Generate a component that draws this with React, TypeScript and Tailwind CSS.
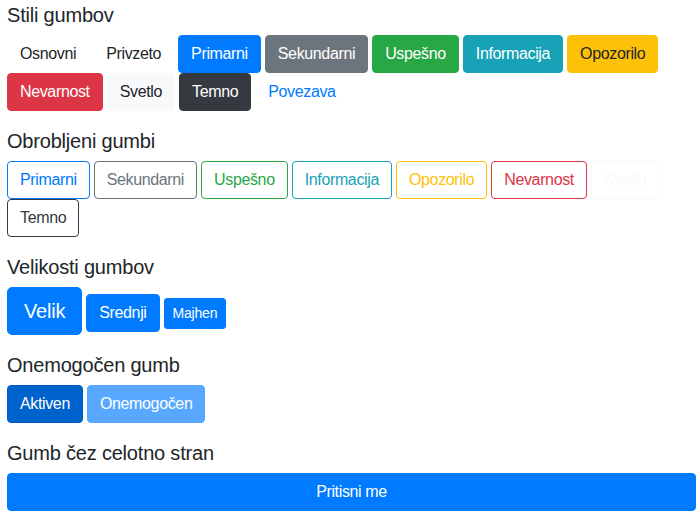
import React from "react";

const base =
  "inline-block rounded-[4px] border px-3 py-1.5 text-[16px] leading-6 tracking-[-0.36px] whitespace-nowrap";

const solid: { label: string; cls: string }[] = [
  { label: "Osnovni", cls: "border-transparent bg-transparent text-[#212529]" },
  { label: "Privzeto", cls: "border-transparent bg-transparent text-[#212529]" },
  { label: "Primarni", cls: "border-[#007bff] bg-[#007bff] text-white" },
  { label: "Sekundarni", cls: "border-[#6c757d] bg-[#6c757d] text-white" },
  { label: "Uspešno", cls: "border-[#28a745] bg-[#28a745] text-white" },
  { label: "Informacija", cls: "border-[#17a2b8] bg-[#17a2b8] text-white" },
  { label: "Opozorilo", cls: "border-[#ffc107] bg-[#ffc107] text-[#212529]" },
  { label: "Nevarnost", cls: "border-[#dc3545] bg-[#dc3545] text-white" },
  { label: "Svetlo", cls: "border-[#f8f9fa] bg-[#f8f9fa] text-[#212529]" },
  { label: "Temno", cls: "border-[#343a40] bg-[#343a40] text-white" },
  { label: "Povezava", cls: "border-transparent bg-transparent text-[#007bff]" },
];

const outline: { label: string; cls: string }[] = [
  { label: "Primarni", cls: "border-[#007bff] text-[#007bff]" },
  { label: "Sekundarni", cls: "border-[#6c757d] text-[#6c757d]" },
  { label: "Uspešno", cls: "border-[#28a745] text-[#28a745]" },
  { label: "Informacija", cls: "border-[#17a2b8] text-[#17a2b8]" },
  { label: "Opozorilo", cls: "border-[#ffc107] text-[#ffc107]" },
  { label: "Nevarnost", cls: "border-[#dc3545] text-[#dc3545]" },
  { label: "Svetlo", cls: "border-[#f8f9fa] text-[#f8f9fa]" },
  { label: "Temno", cls: "border-[#343a40] text-[#343a40]" },
];

function Heading({ children, first }: { children: React.ReactNode; first?: boolean }) {
  return (
    <h5
      className={`mb-2 text-[20px] leading-6 font-normal tracking-[-0.2px] text-[#212529] ${
        first ? "mt-[3px]" : "mt-[18px]"
      }`}
    >
      {children}
    </h5>
  );
}

export default function App() {
  return (
    <div
      className="min-h-[516px] w-[700px] bg-white pl-[7px] pr-[4px] text-[#212529]"
      style={{ fontFamily: '"Liberation Sans", Arial, sans-serif' }}
    >
      <Heading first>Stili gumbov</Heading>
      <div className="flex flex-wrap gap-x-1">
        {solid.map((b) => (
          <button key={b.label} type="button" className={`${base} ${b.cls}`}>
            {b.label}
          </button>
        ))}
      </div>

      <Heading>Obrobljeni gumbi</Heading>
      <div className="flex flex-wrap gap-x-1">
        {outline.map((b) => (
          <button key={b.label} type="button" className={`${base} bg-transparent ${b.cls}`}>
            {b.label}
          </button>
        ))}
      </div>

      <Heading>Velikosti gumbov</Heading>
      <div className="flex items-baseline gap-x-1">
        <button
          type="button"
          className="inline-block rounded-[5px] border border-[#007bff] bg-[#007bff] px-4 py-2 text-[20px] leading-[30px] tracking-[-0.2px] text-white"
        >
          Velik
        </button>
        <button type="button" className={`${base} border-[#007bff] bg-[#007bff] text-white`}>
          Srednji
        </button>
        <button
          type="button"
          className="inline-block rounded-[3px] border border-[#007bff] bg-[#007bff] px-2 py-1 text-[14px] leading-[21px] tracking-[-0.2px] text-white"
        >
          Majhen
        </button>
      </div>

      <Heading>Onemogočen gumb</Heading>
      <div className="flex gap-x-1">
        <button type="button" className={`${base} border-[#005cbf] bg-[#0062cc] text-white`}>
          Aktiven
        </button>
        <button
          type="button"
          disabled
          className={`${base} border-[#007bff] bg-[#007bff] text-white opacity-65`}
        >
          Onemogočen
        </button>
      </div>

      <Heading>Gumb čez celotno stran</Heading>
      <button
        type="button"
        className={`${base} block w-full border-[#007bff] bg-[#007bff] text-center text-white`}
      >
        Pritisni me
      </button>
    </div>
  );
}
